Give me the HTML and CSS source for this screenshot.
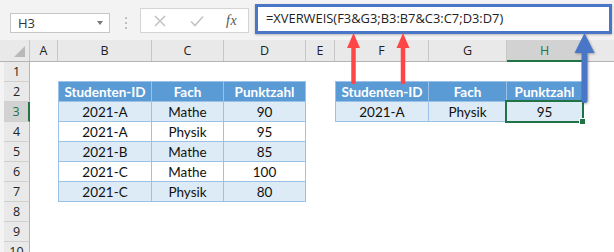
FILE: index.html
```html
<!doctype html>
<html lang="de">
  <head>
    <meta charset="utf-8">
    <title>XVERWEIS – mehrere Kriterien</title>
    <link rel="stylesheet" href="styles.css">
  </head>
  <body>
    <div class="app">
      <div class="toolbar">
        <div class="namebox"><span>H3</span><i class="caret"></i></div>
        <svg class="grip" width="4" height="14" viewBox="0 0 4 14">
          <circle cx="2" cy="2" r="1.1"/><circle cx="2" cy="7" r="1.1"/><circle cx="2" cy="12" r="1.1"/>
        </svg>
        <div class="fnbtns">
          <svg class="btn" width="12" height="12" viewBox="0 0 12 12"><path d="M1 1 L11 11 M11 1 L1 11"/></svg>
          <svg class="btn" width="14" height="12" viewBox="0 0 14 12"><path d="M1 6.5 L5 10.5 L13 1.5"/></svg>
          <span class="fx">fx</span>
        </div>
        <div class="formula">=XVERWEIS(F3&amp;G3;B3:B7&amp;C3:C7;D3:D7)</div>
      </div>

      <div class="colhdrs">
        <div class="corner"><i class="tri"></i></div>
        <div class="ch">A</div>
        <div class="ch">B</div>
        <div class="ch">C</div>
        <div class="ch">D</div>
        <div class="ch">E</div>
        <div class="ch">F</div>
        <div class="ch">G</div>
        <div class="ch active">H</div>
        <div class="ch"></div>
      </div>

      <div class="body">
        <div class="rowhdrs">
          <div class="rh">1</div>
          <div class="rh">2</div>
          <div class="rh active">3</div>
          <div class="rh">4</div>
          <div class="rh">5</div>
          <div class="rh">6</div>
          <div class="rh">7</div>
          <div class="rh">8</div>
          <div class="rh">9</div>
          <div class="rh">10</div>
        </div>
        <div class="cells">
          <div class="xt xt-left">
            <div class="th">Studenten-ID</div><div class="th">Fach</div><div class="th">Punktzahl</div>
            <div class="td">2021-A</div><div class="td">Mathe</div><div class="td">90</div>
            <div class="td">2021-A</div><div class="td">Physik</div><div class="td">95</div>
            <div class="td">2021-B</div><div class="td">Mathe</div><div class="td">85</div>
            <div class="td">2021-C</div><div class="td">Mathe</div><div class="td">100</div>
            <div class="td">2021-C</div><div class="td">Physik</div><div class="td">80</div>
          </div>
          <div class="xt xt-right">
            <div class="th">Studenten-ID</div><div class="th">Fach</div><div class="th">Punktzahl</div>
            <div class="td">2021-A</div><div class="td">Physik</div><div class="td sel">95<i class="selbox"></i><i class="handle"></i></div>
          </div>
        </div>
      </div>

      <svg class="arrows" width="614" height="252" viewBox="0 0 614 252">
        <g class="red">
          <line x1="353.5" y1="46" x2="353.5" y2="82"/>
          <polygon points="353.5,33 347,48 360,48"/>
          <line x1="403" y1="46" x2="403" y2="82"/>
          <polygon points="403,33 396.5,48 409.5,48"/>
        </g>
        <g class="blue">
          <line x1="584.5" y1="50" x2="584.5" y2="100"/>
          <polygon points="584.5,33 574.5,53 594.5,53"/>
        </g>
      </svg>
    </div>
  </body>
</html>
```

FILE: styles.css
```css
html, body { margin: 0; padding: 0; background: #fff; }
body { font-family: "Open Sans", "Noto Sans", sans-serif; color: #222; }

.app { position: relative; width: 614px; height: 252px; overflow: hidden; }

/* formula bar */
.toolbar { display: flex; align-items: flex-start; height: 40px; background: #f3f3f3; padding-left: 10px; box-sizing: border-box; }
.namebox { display: flex; align-items: center; justify-content: space-between; width: 100px; height: 20px; margin-top: 13px; padding: 0 6px 0 7px; box-sizing: border-box; background: #fff; border: 1px solid #c6c6c6; font-size: 13px; color: #333; }
.caret { width: 0; height: 0; border-left: 3.5px solid transparent; border-right: 3.5px solid transparent; border-top: 4px solid #777; }
.grip { margin: 16px 0 0 14px; fill: #b3b3b3; }
.fnbtns { display: flex; align-items: center; width: 109px; height: 25px; margin: 8px 0 0 12px; padding-left: 13px; box-sizing: border-box; background: #fff; border: 1px solid #d4d4d4; }
.btn { fill: none; stroke: #c4c4c4; stroke-width: 1.6; margin-right: 24px; }
.btn + .btn { margin-right: 22px; }
.fx { font-family: "Liberation Serif", serif; font-style: italic; font-size: 14px; color: #555; letter-spacing: 0.5px; }
.formula { flex: 1; height: 30px; margin: 4px 2px 0 6px; padding-left: 8px; box-sizing: border-box; background: #fff; border: 3px solid #4a76c8; box-shadow: 0 1px 2px rgba(0, 0, 0, 0.25); font-size: 12.9px; line-height: 23px; color: #222; white-space: nowrap; }

/* headers */
.colhdrs { display: grid; grid-template-columns: 30px 28px 94px 72px 82px 29px 94px 78px 76px 80px; height: 22px; background: #e9e9e9; border-bottom: 1px solid #b4b4b4; box-sizing: border-box; }
.corner { position: relative; border-right: 1px solid #c6c6c6; }
.tri { position: absolute; right: 4px; bottom: 4px; width: 0; height: 0; border-left: 11px solid transparent; border-bottom: 11px solid #b9b9b9; }
.ch { display: flex; align-items: center; justify-content: center; border-right: 1px solid #c6c6c6; font-size: 12.5px; color: #222; }
.ch.active { background: #d2d2d2; color: #217346; border-bottom: 2px solid #217346; margin-bottom: -1px; }

.body { display: flex; }
.rowhdrs { flex: none; width: 30px; padding-left: 4px; box-sizing: border-box; background: #f3f3f3; }
.rh { display: flex; align-items: center; justify-content: center; height: 20px; box-sizing: border-box; background: #e9e9e9; border-bottom: 1px solid #d0d0d0; border-right: 1px solid #b4b4b4; font-size: 12.5px; color: #222; }
.rh.active { background: #d2d2d2; color: #217346; border-right: 2px solid #217346; }

/* sheet cells */
.cells { flex: 1; min-width: 0; display: grid; grid-template-columns: 28px 94px 72px 82px 29px 94px 78px 76px 80px; grid-template-rows: repeat(10, 20px); background: #fff; }

.xt { display: grid; grid-auto-rows: 20px; border-left: 1px solid #9bc2e6; border-top: 1px solid #9bc2e6; margin-top: -1px; font-family: Lato, "Open Sans", sans-serif; font-size: 13.5px; color: #111; }
.xt-left { grid-column: 2 / 5; grid-row: 2 / 8; grid-template-columns: 93px 72px 82px; }
.xt-right { grid-column: 6 / 9; grid-row: 2 / 4; grid-template-columns: 93px 78px 76px; }
.th, .td { display: flex; align-items: center; justify-content: center; border-right: 1px solid #9bc2e6; border-bottom: 1px solid #9bc2e6; white-space: nowrap; }
.th { background: #5b9bd5; color: #fff; font-weight: bold; }
.td { background: #fff; }
.xt .td:nth-child(6n+4), .xt .td:nth-child(6n+5), .xt .td:nth-child(6n+6) { background: #ddebf7; }

.sel { position: relative; }
.selbox { position: absolute; left: -2px; top: -2px; right: -2px; bottom: -2px; border: 2px solid #217346; }
.handle { position: absolute; right: -4px; bottom: -4px; width: 5px; height: 5px; background: #217346; border: 1px solid #fff; }

/* call-out arrows */
.arrows { position: absolute; left: 0; top: 0; pointer-events: none; }
.red line { stroke: #ff4646; stroke-width: 4.5; stroke-linecap: round; }
.red polygon { fill: #ff4646; }
.blue { filter: drop-shadow(1px 1px 1px rgba(0, 0, 0, 0.3)); }
.blue line { stroke: #4a76c8; stroke-width: 6; stroke-linecap: round; }
.blue polygon { fill: #4a76c8; }
```
